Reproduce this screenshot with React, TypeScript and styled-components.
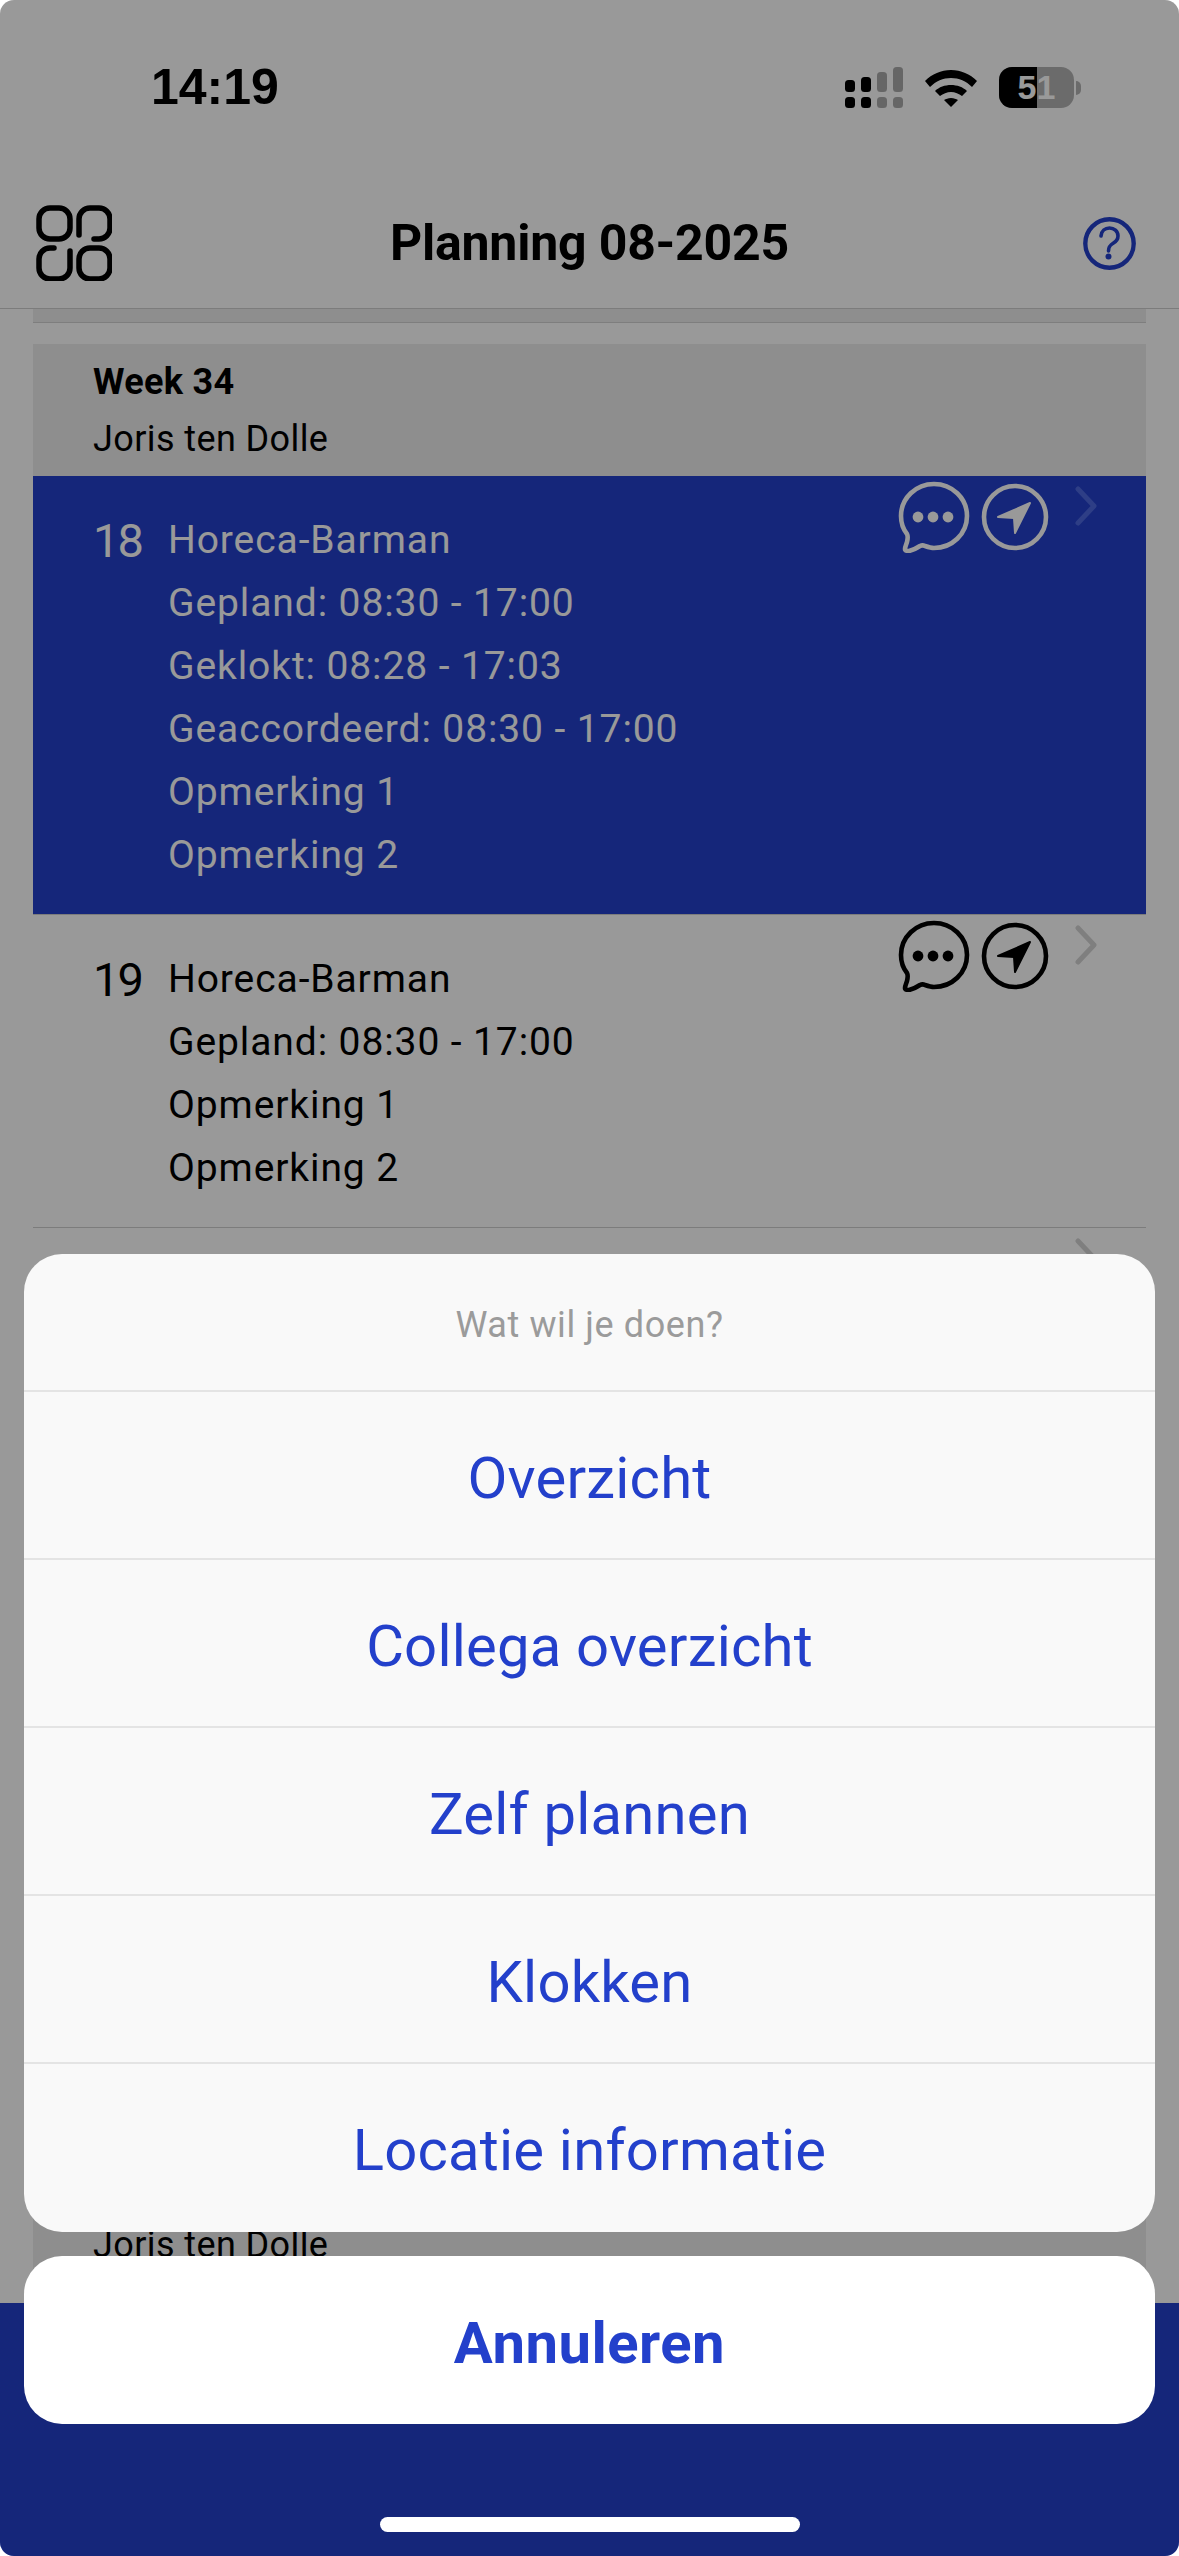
import React from 'react';
import styled, {createGlobalStyle} from 'styled-components';

const GlobalStyle = createGlobalStyle`
  html, body {
    margin: 0;
    padding: 0;
    background: #fff;
  }
  * {
    box-sizing: border-box;
  }
`

const FONT = `Roboto, "Noto Sans", sans-serif`
const BLUE = '#2340cb'

type DayType = {
    day: string
    lines: string[]
    active?: boolean
}

const days: DayType[] = [
    {
        day: '18',
        active: true,
        lines: ['Horeca-Barman', 'Gepland: 08:30 - 17:00', 'Geklokt: 08:28 - 17:03', 'Geaccordeerd: 08:30 - 17:00', 'Opmerking 1', 'Opmerking 2'],
    },
    {
        day: '19',
        lines: ['Horeca-Barman', 'Gepland: 08:30 - 17:00', 'Opmerking 1', 'Opmerking 2'],
    },
]

const actions = ['Overzicht', 'Collega overzicht', 'Zelf plannen', 'Klokken', 'Locatie informatie']

const ChatIcon = () => (
    <svg width="72" height="72" viewBox="0 0 72 72" fill="none" stroke="currentColor" strokeWidth="4.6" strokeLinejoin="round">
        <path d="M36 3C18 3 3 17 3 35c0 7 2 13 6 18 1 2 1 4 0 8-1 3-2 5-2 7 0 2 2 2 4 2 4-1 8-3 11-5 2-1 3-1 5 0 3 1 6 2 9 2 18 0 33-14 33-32S54 3 36 3Z" />
        <circle cx="20" cy="36" r="5.4" fill="currentColor" stroke="none" />
        <circle cx="35" cy="36" r="5.4" fill="currentColor" stroke="none" />
        <circle cx="50" cy="36" r="5.4" fill="currentColor" stroke="none" />
    </svg>
)

const NavIcon = () => (
    <svg width="68" height="68" viewBox="0 0 68 68" fill="none" stroke="currentColor" strokeWidth="4.6">
        <circle cx="34" cy="34" r="31" />
        <path d="M17 34 49 20 34 50 33 35Z" fill="currentColor" strokeWidth="2" strokeLinejoin="round" />
    </svg>
)

const Chevron = () => (
    <svg width="22" height="40" viewBox="0 0 22 40" fill="none" stroke="currentColor" strokeWidth="5" strokeLinecap="round" strokeLinejoin="round">
        <path d="M3 3 19 20 3 37" />
    </svg>
)

const MenuIcon = () => (
    <svg width="76" height="76" viewBox="0 0 76 76" fill="none" stroke="#000" strokeWidth="5.5" strokeLinecap="round">
        <rect x="3" y="3" width="31" height="31" rx="11" />
        <path d="M43 30V14A11 11 0 0 1 54 3h9a11 11 0 0 1 11 11v9a11 11 0 0 1-11 11h-5" />
        <path d="M18 43h-4A11 11 0 0 0 3 54v9a11 11 0 0 0 11 11h9a11 11 0 0 0 11-11V46" />
        <rect x="43" y="43" width="31" height="31" rx="11" />
    </svg>
)

const HelpIcon = () => (
    <svg width="53" height="53" viewBox="0 0 53 53" fill="none" stroke={BLUE} strokeWidth="4.4">
        <circle cx="26.5" cy="26.5" r="24.2" />
        <path d="M18 19c.5-5 4-8 8.5-8S35 14 35 19c0 3.5-2 5.5-4.5 7S25.5 29 25.5 34" strokeLinecap="round" strokeWidth="3.6" />
        <circle cx="25.5" cy="39.5" r="3" fill={BLUE} stroke="none" />
    </svg>
)

const SignalIcon = () => (
    <svg width="58" height="41" viewBox="0 0 58 41" fill="#000">
        <rect x="0" y="13" width="10" height="12" rx="3.5" />
        <rect x="16" y="10" width="10" height="15" rx="3.5" />
        <rect x="32" y="5" width="10" height="20" rx="3.5" opacity=".33" />
        <rect x="48" y="0" width="10" height="25" rx="3.5" opacity=".33" />
        <rect x="0" y="30" width="10" height="11" rx="3.5" />
        <rect x="16" y="30" width="10" height="11" rx="3.5" />
        <rect x="32" y="30" width="10" height="11" rx="3.5" opacity=".33" />
        <rect x="48" y="30" width="10" height="11" rx="3.5" opacity=".33" />
    </svg>
)

const WifiIcon = () => (
    <svg width="52" height="38" viewBox="0 0 52 38" fill="#000">
        <path d="M0 12C7 5 16 1 26 1s19 4 26 11l-5 6C41 12 34 9 26 9S11 12 5 18Z" />
        <path d="M10 22c4-4 10-6 16-6s12 2 16 6l-5 5c-3-2-7-4-11-4s-8 2-11 4Z" />
        <path d="M19 31c2-1 4-2 7-2s5 1 7 2L26 38Z" />
    </svg>
)

export default function App() {
    return (
        <Screen>
            <GlobalStyle />
            <StatusBar>
                <Clock>14:19</Clock>
                <StatusIcons>
                    <SignalIcon />
                    <WifiIcon />
                    <Battery>
                        <BatteryBody>
                            <BatteryFill />
                            <BatteryLevel>51</BatteryLevel>
                        </BatteryBody>
                        <BatteryTip />
                    </Battery>
                </StatusIcons>
            </StatusBar>

            <Header>
                <MenuSlot><MenuIcon /></MenuSlot>
                <Title>Planning 08-2025</Title>
                <HelpSlot><HelpIcon /></HelpSlot>
            </Header>

            <List>
                <PreviousWeekEnd />
                <WeekHeader>
                    <WeekTitle>Week 34</WeekTitle>
                    <WeekName>Joris ten Dolle</WeekName>
                </WeekHeader>
                {days.map(d => (
                    <DayRow key={d.day} $active={d.active}>
                        <DayNumber>{d.day}</DayNumber>
                        <DayLines>
                            {d.lines.map(l => <DayLine key={l}>{l}</DayLine>)}
                        </DayLines>
                        <RowIcons>
                            <ChatIcon />
                            <NavIcon />
                        </RowIcons>
                        <RowChevron $active={d.active}><Chevron /></RowChevron>
                    </DayRow>
                ))}
                <EmptyRow>
                    <RowChevron><Chevron /></RowChevron>
                </EmptyRow>
                <WeekHeader>
                    <WeekTitle>Week 35</WeekTitle>
                    <WeekName>Joris ten Dolle</WeekName>
                </WeekHeader>
            </List>

            <Footer />

            <Backdrop>
                <Sheet>
                    <SheetTitle>Wat wil je doen?</SheetTitle>
                    {actions.map(a => <SheetAction key={a}>{a}</SheetAction>)}
                </Sheet>
                <CancelButton>Annuleren</CancelButton>
            </Backdrop>
            <HomeBar />
        </Screen>
    );
}

const Screen = styled.div`
  position: relative;
  width: 1179px;
  height: 2556px;
  display: flex;
  flex-direction: column;
  overflow: hidden;
  border-radius: 14px;
  background: #fff;
  font-family: ${FONT};
  color: #000;
`

const StatusBar = styled.div`
  height: 160px;
  flex: none;
  display: flex;
  align-items: flex-start;
  justify-content: space-between;
  padding: 57px 98px 0 151px;
`

const Clock = styled.div`
  font-family: "Liberation Sans", sans-serif;
  font-size: 50px;
  line-height: 60px;
  font-weight: 700;
`

const StatusIcons = styled.div`
  display: flex;
  align-items: center;
  gap: 22px;
  margin-top: 10px;
`

const Battery = styled.div`
  display: flex;
  align-items: center;
  gap: 2px;
`

const BatteryBody = styled.div`
  position: relative;
  width: 75px;
  height: 41px;
  border-radius: 13px;
  overflow: hidden;
  background: rgba(0, 0, 0, .3);
  display: flex;
  align-items: center;
  justify-content: center;
`

const BatteryFill = styled.div`
  position: absolute;
  left: 0;
  top: 0;
  bottom: 0;
  width: 51%;
  background: #000;
`

const BatteryLevel = styled.span`
  position: relative;
  font-family: "Liberation Sans", sans-serif;
  font-size: 34px;
  font-weight: 700;
  color: #fff;
`

const BatteryTip = styled.div`
  width: 5px;
  height: 14px;
  border-radius: 0 7px 7px 0;
  background: rgba(0, 0, 0, .3);
`

const Header = styled.div`
  height: 149px;
  flex: none;
  display: grid;
  grid-template-columns: 1fr auto 1fr;
  align-items: center;
  padding: 18px 43px 0;
  border-bottom: 1px solid #cfcfcf;
`

const MenuSlot = styled.div`
  display: flex;
  margin-left: -7px;
`

const HelpSlot = styled.div`
  display: flex;
  justify-content: flex-end;
`

const Title = styled.h1`
  margin: 0;
  font-size: 50px;
  line-height: 60px;
  font-weight: 700;
  letter-spacing: -.2px;
`

const List = styled.div`
  flex: 1;
  min-height: 0;
  overflow: hidden;
  padding: 0 33px;
`

const PreviousWeekEnd = styled.div`
  height: 14px;
  margin-bottom: 21px;
  background: #ededed;
  border-bottom: 1px solid #d2d2d2;
`

const WeekHeader = styled.div`
  height: 132px;
  padding: 15px 60px 0;
  background: #ededed;
`

const WeekTitle = styled.div`
  font-size: 36px;
  line-height: 46px;
  font-weight: 700;
  letter-spacing: .3px;
`

const WeekName = styled.div`
  margin-top: 11px;
  font-size: 36px;
  line-height: 46px;
  letter-spacing: .4px;
`

const DayRow = styled.div<{$active?: boolean}>`
  position: relative;
  display: flex;
  align-items: flex-start;
  padding: 33px 0 27px 60px;
  background: ${({$active}) => $active ? BLUE : '#fff'};
  color: ${({$active}) => $active ? '#fff' : '#000'};
  border-bottom: 1px solid #cfcfcf;
`

const EmptyRow = styled.div`
  position: relative;
  height: 922px;
`

const DayNumber = styled.div`
  width: 75px;
  flex: none;
  font-size: 47px;
  line-height: 63px;
  letter-spacing: -2px;
`

const DayLines = styled.div`
  display: flex;
  flex-direction: column;
`

const DayLine = styled.div`
  font-size: 39px;
  line-height: 63px;
  letter-spacing: .9px;
  white-space: nowrap;
`

const RowIcons = styled.div`
  position: absolute;
  top: 5px;
  right: 97px;
  display: flex;
  align-items: center;
  gap: 11px;
`

const RowChevron = styled.div<{$active?: boolean}>`
  position: absolute;
  top: 10px;
  right: 49px;
  color: ${({$active}) => $active ? '#4d68e0' : '#d4d4d4'};
  display: flex;
`

const Footer = styled.div`
  height: 253px;
  flex: none;
  background: ${BLUE};
`

const Backdrop = styled.div`
  position: absolute;
  inset: 0;
  display: flex;
  flex-direction: column;
  justify-content: flex-end;
  gap: 24px;
  padding: 0 24px 132px;
  background: rgba(0, 0, 0, .4);
`

const Sheet = styled.div`
  border-radius: 38px;
  overflow: hidden;
  padding-bottom: 2px;
  background: #f9f9f9;
`

const SheetTitle = styled.div`
  height: 136px;
  padding-top: 5px;
  display: flex;
  align-items: center;
  justify-content: center;
  font-size: 36px;
  letter-spacing: .6px;
  color: #9b9b9b;
`

const SheetAction = styled.div`
  height: 168px;
  padding-top: 6px;
  display: flex;
  align-items: center;
  justify-content: center;
  border-top: 2px solid #e4e4e4;
  font-size: 58px;
  letter-spacing: .2px;
  color: ${BLUE};
`

const CancelButton = styled.div`
  height: 168px;
  padding-top: 5px;
  display: flex;
  align-items: center;
  justify-content: center;
  border-radius: 38px;
  background: #fff;
  font-size: 58px;
  font-weight: 700;
  letter-spacing: .5px;
  color: ${BLUE};
`

const HomeBar = styled.div`
  position: absolute;
  left: 380px;
  top: 2517px;
  width: 420px;
  height: 15px;
  border-radius: 8px;
  background: #fff;
`
